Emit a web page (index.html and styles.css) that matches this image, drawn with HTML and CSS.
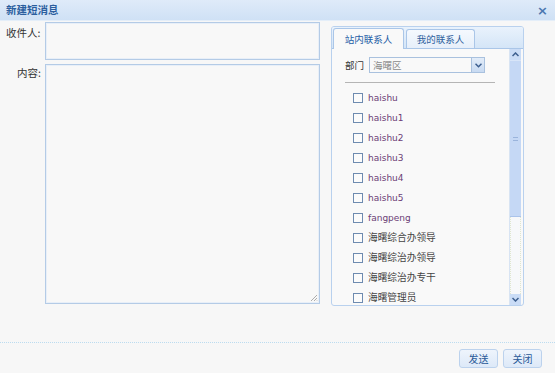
FILE: index.html
```html
<!DOCTYPE html>
<html>
<head>
<meta charset="utf-8">
<link rel="stylesheet" href="styles.css">
</head>
<body>
<div class="dialog">
  <div class="titlebar">
    <span class="title">新建短消息</span>
    <span class="close">×</span>
  </div>
  <div class="main">
    <div class="form">
      <div class="row">
        <label class="lbl">收件人:</label>
        <div class="box recipient"></div>
      </div>
      <div class="row">
        <label class="lbl lbl-content">内容:</label>
        <div class="box content">
          <svg class="grip" width="8" height="8" viewBox="0 0 8 8"><path d="M7 1L1 7M7 4L4 7M7 6.5L6.5 7" stroke="#999" stroke-width="0.8"/></svg>
        </div>
      </div>
    </div>
    <div class="panel">
      <div class="tabs">
        <div class="tab active">站内联系人</div>
        <div class="tab">我的联系人</div>
      </div>
      <div class="panel-body">
        <div class="inner">
          <div class="dept">
            <span class="dept-lbl">部门</span>
            <div class="select">
              <span class="select-val">海曙区</span>
              <span class="select-btn"><svg width="7" height="5" viewBox="0 0 7 5"><path d="M0.5 0.8L3.5 3.8L6.5 0.8" fill="none" stroke="#3d5f8f" stroke-width="1.5"/></svg></span>
            </div>
          </div>
          <div class="sep"></div>
          <ul class="list">
            <li><span class="cb"></span><span class="name en">haishu</span></li>
            <li><span class="cb"></span><span class="name en">haishu1</span></li>
            <li><span class="cb"></span><span class="name en">haishu2</span></li>
            <li><span class="cb"></span><span class="name en">haishu3</span></li>
            <li><span class="cb"></span><span class="name en">haishu4</span></li>
            <li><span class="cb"></span><span class="name en">haishu5</span></li>
            <li><span class="cb"></span><span class="name en">fangpeng</span></li>
            <li><span class="cb"></span><span class="name zh">海曙综合办领导</span></li>
            <li><span class="cb"></span><span class="name zh">海曙综治办领导</span></li>
            <li><span class="cb"></span><span class="name zh">海曙综治办专干</span></li>
            <li><span class="cb"></span><span class="name zh">海曙管理员</span></li>
          </ul>
        </div>
        <div class="scrollbar">
          <div class="sb-btn"><svg width="7" height="5" viewBox="0 0 7 5"><path d="M0.5 4L3.5 1L6.5 4" fill="none" stroke="#3d5f8f" stroke-width="1.5"/></svg></div>
          <div class="sb-thumb"><span class="sb-grip"></span></div>
          <div class="sb-track"></div>
          <div class="sb-btn"><svg width="7" height="5" viewBox="0 0 7 5"><path d="M0.5 1L3.5 4L6.5 1" fill="none" stroke="#3d5f8f" stroke-width="1.5"/></svg></div>
        </div>
      </div>
    </div>
  </div>
  <div class="footer">
    <button class="btn">发送</button>
    <button class="btn">关闭</button>
  </div>
</div>
</body>
</html>
```

FILE: styles.css
```css
* { box-sizing: border-box; }
html, body { margin: 0; padding: 0; }
body {
  width: 555px;
  height: 373px;
  background: #f7f7f7;
  font-family: "Noto Sans CJK SC", "DejaVu Sans", sans-serif;
  overflow: hidden;
}
.dialog { width: 555px; height: 373px; display: flex; flex-direction: column; }
.titlebar {
  height: 21px;
  flex: none;
  display: flex;
  align-items: center;
  justify-content: space-between;
  padding: 0 7px 0 6px;
  background: linear-gradient(#dfebf9, #cfe1f5);
  border-bottom: 1px solid #e4eef9;
}
.title { font-size: 10.5px; font-weight: bold; color: #2b5e9e; line-height: 1; }
.close { font-size: 13px; font-weight: bold; color: #4a78b0; line-height: 1; font-family: "DejaVu Sans", sans-serif; }
.main {
  height: 321px;
  flex: none;
  display: flex;
  padding: 1px 0 0 0;
}
.form { width: 331px; flex: none; display: flex; flex-direction: column; gap: 4px; }
.row { display: flex; }
.lbl {
  width: 45px;
  flex: none;
  font-size: 10.5px;
  color: #333;
  padding: 5px 0 0 6px;
  line-height: 12px;
  white-space: nowrap;
}
.lbl-content { padding-left: 17px; padding-top: 3px; }
.box {
  width: 275px;
  background: #f8f8f8;
  border: 1px solid #b4cbe6;
  box-shadow: inset 0 0 0 1px #e8eff8;
  position: relative;
}
.recipient { height: 38px; }
.content { height: 240px; }
.grip { position: absolute; right: 1px; bottom: 1px; }
.panel {
  margin-top: 4px;
  width: 193px;
  height: 280px;
  border: 1px solid #b9d1ee;
  border-radius: 3px;
  display: flex;
  flex-direction: column;
  overflow: hidden;
  background: #f9f9f9;
}
.tabs {
  height: 22px;
  flex: none;
  display: flex;
  align-items: flex-end;
  gap: 2px;
  padding-left: 1px;
  background: linear-gradient(#e9f2fc, #d4e5f7);
  border-bottom: 1px solid #aac6e8;
}
.tab {
  height: 19px;
  width: 70px;
  font-size: 9.5px;
  color: #2e5f9d;
  display: flex;
  align-items: center;
  justify-content: center;
  border: 1px solid #aac6e8;
  border-bottom: none;
  border-radius: 3px 3px 0 0;
  background: linear-gradient(#f5f9fe, #e6effa);
  margin-bottom: 0;
}
.tab.active {
  height: 21px;
  width: 71px;
  background: #f9f9f9;
  margin-bottom: -1px;
  color: #1f5da6;
}
.tab + .tab { width: 69px; }
.panel-body { flex: 1; display: flex; min-height: 0; }
.inner { flex: 1; padding: 8px 0 0 13px; overflow: hidden; }
.dept { display: flex; align-items: center; gap: 5px; height: 16px; }
.dept-lbl { font-size: 9.5px; color: #333; }
.select {
  width: 116px;
  height: 16px;
  border: 1px solid #a9c1de;
  background: #f9f9f9;
  display: flex;
  align-items: center;
  justify-content: space-between;
}
.select-val { font-size: 9.5px; color: #8a8a8a; padding-left: 3px; }
.select-btn {
  width: 13px;
  height: 14px;
  background: linear-gradient(#e2ecf9, #c8daf2);
  border-left: 1px solid #a9c1de;
  display: flex;
  align-items: center;
  justify-content: center;
}
.sep { margin: 9px 0 0 0; width: 150px; height: 1px; background: #b5b5b5; }
.list { list-style: none; margin: 5px 0 0 0; padding: 0 0 0 8px; }
.list li { height: 20px; display: flex; align-items: center; }
.cb {
  width: 10px;
  height: 10px;
  flex: none;
  border: 1px solid #6e8bb0;
  background: #fbfbfb;
  margin-right: 5px;
}
.name { white-space: nowrap; line-height: 1; }
.en { font-family: "DejaVu Sans", sans-serif; font-size: 9px; color: #6b3d76; }
.zh { font-size: 9.7px; color: #444; }
.scrollbar {
  width: 12px;
  flex: none;
  margin-right: 2px;
  display: flex;
  flex-direction: column;
  border-left: 1px solid #d8e4f3;
}
.sb-btn {
  height: 11px;
  flex: none;
  background: #cadcf6;
  display: flex;
  align-items: center;
  justify-content: center;
}
.sb-thumb {
  height: 157px;
  flex: none;
  background: #c5d8f5;
  border-top: 1px solid #d8e5f8;
  border-bottom: 1px solid #aac3ea;
  display: flex;
  align-items: center;
  justify-content: center;
}
.sb-grip { width: 5px; height: 4px; border-top: 1px solid #9ab4dc; border-bottom: 1px solid #9ab4dc; }
.sb-track { flex: 1; background: #f7f8fa; border-left: 1px dotted #dfe6cf; border-right: 1px dotted #dfe6cf; }
.footer {
  flex: 1;
  border-top: 1px dotted #bcdcf0;
  display: flex;
  justify-content: flex-end;
  align-items: flex-start;
  gap: 5px;
  padding: 6px 13px 0 0;
}
.btn {
  width: 39px;
  height: 19px;
  padding: 0;
  font-family: "Noto Sans CJK SC", sans-serif;
  font-size: 10px;
  color: #2a5a98;
  background: linear-gradient(#eef4fc, #dde9f8);
  border: 1px solid #bcd2ed;
  border-radius: 3px;
  display: flex;
  align-items: center;
  justify-content: center;
}
```
